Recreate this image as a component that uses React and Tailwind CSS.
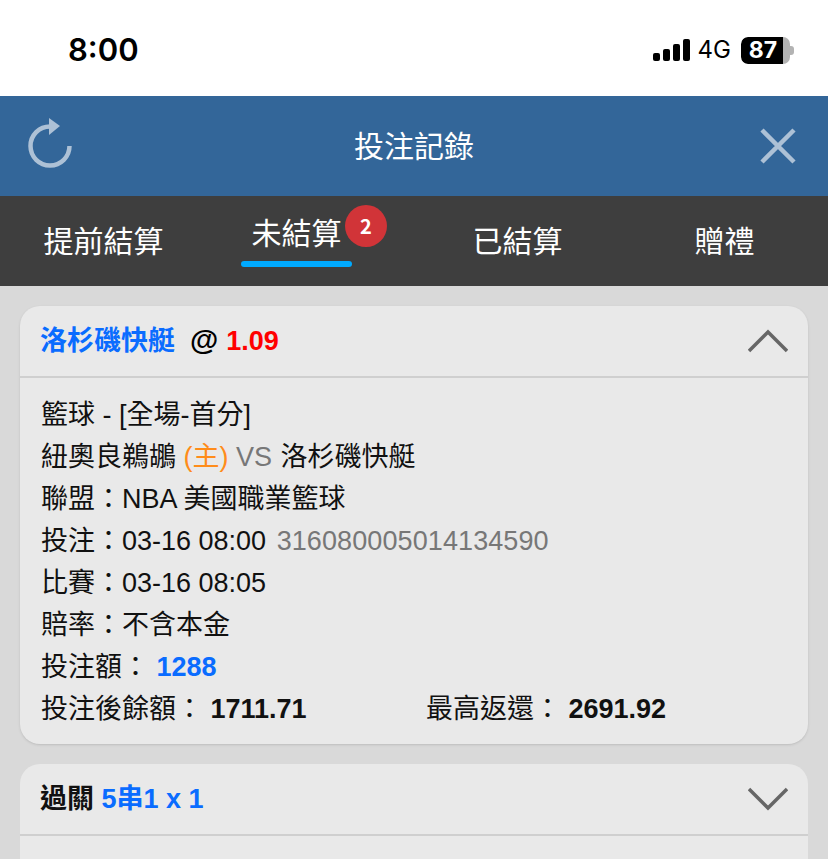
import { useState } from 'react';

const TABS = ['提前結算', '未結算', '已結算', '贈禮'];

const FONT = "font-['Liberation_Sans','Noto_Sans_CJK_TC',sans-serif]";

function StatusBar() {
  return (
    <div className="h-24 bg-white flex items-start justify-between pl-[68px] pr-[34px] pt-[29px]">
      <span className="font-['Inter',sans-serif] text-[31px] leading-[41px] font-semibold text-black">8:00</span>
      <div className="flex items-center mt-[7px] h-[28px]">
        <svg width="38" height="24" viewBox="0 0 38 24" className="mr-[7px]">
          <rect x="0" y="15" width="7" height="8" rx="2" fill="#000" />
          <rect x="10" y="11" width="7" height="12" rx="2" fill="#000" />
          <rect x="20" y="6" width="7" height="17" rx="2" fill="#000" />
          <rect x="30" y="1" width="7" height="22" rx="2" fill="#000" />
        </svg>
        <span className="font-['Inter',sans-serif] text-[24px] leading-7 font-normal text-black">4G</span>
        <div className="ml-[10px] flex items-center">
          <div className="w-[49px] h-[27px] rounded-[7px] bg-[#b3b3b3] overflow-hidden">
            <div className="w-[42px] h-full bg-black rounded-l-[7px] pl-[2px] text-white font-['Inter',sans-serif] font-bold text-[23px] leading-[27px] text-center">87</div>
          </div>
          <div className="w-[4px] h-[9px] bg-[#b3b3b3] rounded-r-[3px]" />
        </div>
      </div>
    </div>
  );
}

function TopBar() {
  return (
    <div className="h-[100px] bg-[#336699] flex items-center px-[24px]">
      <div className="flex-1">
        <svg width="52" height="60" viewBox="0 0 52 60" fill="none" stroke="#adc1d6">
          <path d="M26 10.5 A19.5 19.5 0 1 0 45.5 30" strokeWidth="4.5" />
          <path d="M25 2 L36 10 L25 19 Z" fill="#adc1d6" stroke="none" />
        </svg>
      </div>
      <span className="text-white text-[30px] leading-10 pb-[5px] font-['Noto_Sans_CJK_TC',sans-serif]">投注記錄</span>
      <div className="flex-1 flex justify-end">
        <svg width="38" height="38" viewBox="0 0 38 38" stroke="#adc1d6" strokeWidth="4.5" className="mr-[7px]">
          <path d="M3 3 L35 35 M35 3 L3 35" />
        </svg>
      </div>
    </div>
  );
}

function Tabs() {
  const [active, setActive] = useState(1);
  return (
    <div className="h-[90px] bg-[#3e3e3e] grid grid-cols-4 text-white text-[30px] font-['Noto_Sans_CJK_TC',sans-serif]">
      {TABS.map((t, i) => (
        <button key={t} onClick={() => setActive(i)} className={`relative flex justify-center ${i === active ? 'pr-[28px]' : ''}`}>
          {i === active ? (
            <div className="relative mt-[15px] flex flex-col items-center">
              <span className="leading-10 px-[10px]">{t}</span>
              <div className="h-[6px] w-[111px] mt-[10px] rounded-full bg-[#00aaff]" />
              <span className="absolute -right-[35px] -top-[6px] w-[42px] h-[42px] rounded-full bg-[#d13438] text-[20px] font-bold flex items-center justify-center">2</span>
            </div>
          ) : (
            <span className="leading-10 mt-[23px]">{t}</span>
          )}
        </button>
      ))}
    </div>
  );
}

function Chevron({ up }) {
  return (
    <svg width="40" height="24" viewBox="0 0 40 24" fill="none" stroke="#666" strokeWidth="3.5">
      <path d={up ? 'M1 22 L20 3 L39 22' : 'M1 2 L20 21 L39 2'} />
    </svg>
  );
}

function Row({ children }) {
  return <div className="h-[42px] leading-[42px] whitespace-pre">{children}</div>;
}

export default function App() {
  return (
    <div className={`h-[859px] w-[828px] overflow-hidden bg-[#d9d9d9] ${FONT}`}>
      <StatusBar />
      <TopBar />
      <Tabs />
      <div className="px-5 pt-5 flex flex-col gap-5 text-[27px] text-[#111]">
        <div className="bg-[#e9e9e9] rounded-[20px] shadow-sm">
          <div className="h-[72px] border-b-2 border-[#cfcfcf] flex items-center justify-between pl-[20px] pr-[20px] font-bold">
            <div className="flex items-center">
              <span className="text-[#0a6cff]">洛杉磯快艇</span>
              <span className="ml-[15px] mr-[8px] text-[29px] text-black">@</span>
              <span className="text-[#ff0000]">1.09</span>
            </div>
            <Chevron up />
          </div>
          <div className="pl-[21px] pt-[16px] pb-[14px]">
            <Row>籃球 - [全場-首分]</Row>
            <Row>
              紐奧良鵜鶘 <span className="text-[#ff8c1a]">(主)</span> <span className="text-[#777]">VS</span> <span className="ml-[1px]">洛杉磯快艇</span>
            </Row>
            <Row>聯盟：NBA 美國職業籃球</Row>
            <Row>
              投注：03-16 08:00 <span className="ml-[3px] tracking-[0.1px] text-[#777]">316080005014134590</span>
            </Row>
            <Row>比賽：03-16 08:05</Row>
            <Row>賠率：不含本金</Row>
            <Row>
              投注額： <span className="font-bold text-[#0a6cff]">1288</span>
            </Row>
            <div className="flex h-[42px] leading-[42px]">
              <div className="w-[385px] whitespace-pre">
                投注後餘額： <span className="font-bold">1711.71</span>
              </div>
              <div className="whitespace-pre">
                最高返還： <span className="font-bold">2691.92</span>
              </div>
            </div>
          </div>
        </div>
        <div className="bg-[#e9e9e9] rounded-t-[20px] h-[200px]">
          <div className="h-[72px] border-b-2 border-[#cfcfcf] flex items-center justify-between pl-[20px] pr-[20px] font-bold">
            <div className="flex items-center whitespace-pre">
              過關 <span className="text-[#0a6cff]">5串1 x 1</span>
            </div>
            <Chevron />
          </div>
        </div>
      </div>
    </div>
  );
}
